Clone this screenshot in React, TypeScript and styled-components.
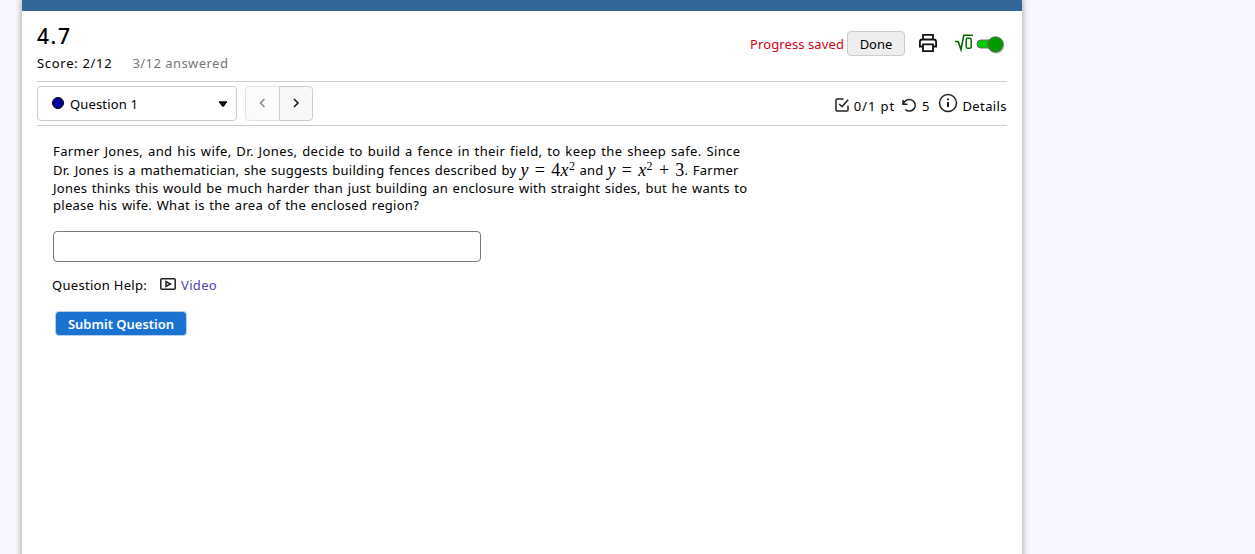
import styled, { createGlobalStyle } from "styled-components";

type SpacingProps = { $spacing?: number };

export default function App() {
    return (
        <>
            <GlobalStyle />
            <Page>
                <TopBar />
                <Content>
                    <Header>
                        <div>
                            <Title>4.7</Title>
                            <ScoreRow>
                                <Label $spacing={0.7}>Score: 2/12</Label>
                                <Answered>3/12 answered</Answered>
                            </ScoreRow>
                        </div>
                        <HeaderTools>
                            <Saved>Progress saved</Saved>
                            <DoneButton>Done</DoneButton>
                            <PrintIcon />
                            <MathToggle />
                        </HeaderTools>
                    </Header>
                    <Toolbar>
                        <Select>
                            <Dot />
                            <Label $spacing={0.15}>Question 1</Label>
                            <Caret viewBox="0 0 8 6">
                                <path d="M0 0.3h8v1L4.6 5.7H3.4L0 1.3z" />
                            </Caret>
                        </Select>
                        <Pager>
                            <PageButton $disabled aria-label="Previous question">
                                <svg width="8" height="10" viewBox="0 0 8 10"><path d="M5.5 1L1.5 5l4 4" /></svg>
                            </PageButton>
                            <PageButton aria-label="Next question">
                                <svg width="8" height="10" viewBox="0 0 8 10"><path d="M2 1l4 4-4 4" /></svg>
                            </PageButton>
                        </Pager>
                        <Details>
                            <CheckIcon />
                            <Points>0/1 pt</Points>
                            <RetryIcon />
                            <Tries>5</Tries>
                            <InfoIcon />
                            <Label $spacing={0.4}>Details</Label>
                        </Details>
                    </Toolbar>
                    <Question>
                        <Line $height={18} $spacing={0.39}>
                            Farmer Jones, and his wife, Dr. Jones, decide to build a fence in their field, to keep the sheep safe. Since
                        </Line>
                        <Line $height={20} $spacing={0.25}>
                            <span>Dr. Jones is a mathematician, she suggests building fences described by</span>
                            <Formula $width={57}><i>y</i> = 4<i>x</i><sup>2</sup></Formula>
                            <span>and</span>
                            <Formula $width={75}><i>y</i> = <i>x</i><sup>2</sup> + 3</Formula>
                            <span>. Farmer</span>
                        </Line>
                        <Line $height={17} $spacing={0.24}>
                            Jones thinks this would be much harder than just building an enclosure with straight sides, but he wants to
                        </Line>
                        <Line $height={17} $spacing={0.27}>
                            please his wife. What is the area of the enclosed region?
                        </Line>
                        <AnswerInput aria-label="Answer" />
                    </Question>
                    <Help>
                        <Label $spacing={0.3}>Question Help:</Label>
                        <VideoIcon />
                        <VideoLink>Video</VideoLink>
                    </Help>
                    <SubmitButton>Submit Question</SubmitButton>
                </Content>
            </Page>
        </>
    );
}

const PrintIcon = () => (
    <Printer viewBox="0 0 20 20">
        <path d="M5 6V1.9h10V6M5 13.5H1.9V9q0-2.5 2.5-2.5h11.2q2.5 0 2.5 2.5v4.5H15" />
        <path d="M5 11.3h10v6.8H5z" />
    </Printer>
);

const MathToggle = () => (
    <Toggle viewBox="0 0 52 24">
        <path d="M1 9.5h3.2L7 17.6 9.8 3.2H19" fill="none" stroke="#006a00" strokeWidth="1.6" />
        <rect x="12.2" y="6.3" width="5" height="10" rx="1.6" fill="none" stroke="#006a00" strokeWidth="1.5" />
        <rect x="23" y="8" width="22" height="8" rx="4" fill="#0c0" stroke="#666" />
        <circle cx="42.5" cy="13.8" r="8" fill="#000" opacity="0.2" />
        <circle cx="41.5" cy="12.5" r="7.8" fill="#009900" stroke="#666" strokeWidth="0.8" />
    </Toggle>
);

const CheckIcon = () => (
    <Icon $size={14} $gap={5} $lift={1} viewBox="0 0 14 14">
        <path d="M8.5 1H2q-1 0-1 1v10q0 1 1 1h10q1 0 1-1V7.5" />
        <path d="M4.2 6l2.8 2.6L13.2 1.8" />
    </Icon>
);

const RetryIcon = () => (
    <Icon $size={15} $gap={5} $lift={1} viewBox="0 0 15 15">
        <path d="M1 2v4.3h4.5M1.4 6A6 5.8 0 1 1 3.4 11.7" />
    </Icon>
);

const InfoIcon = () => (
    <Icon $size={20} $gap={4} $lift={3} viewBox="0 0 20 20">
        <circle cx="10" cy="10" r="8.5" />
        <path d="M10 9v5M10 5.5v1.7" strokeWidth="2" />
    </Icon>
);

const VideoIcon = () => (
    <Icon $size={16} $gap={5} $lift={1} viewBox="0 0 16 16">
        <rect x="0.8" y="2.7" width="14.4" height="10.6" rx="1" />
        <path d="M6 5.5v5L10.5 8z" />
    </Icon>
);

const GlobalStyle = createGlobalStyle`
    * {
        box-sizing: border-box;
    }
    body {
        margin: 0;
        overflow: hidden;
        background-color: #f7f7ff;
        font-family: "Noto Sans", sans-serif;
        font-size: 13px;
        color: #000;
    }
`;

const Page = styled.div`
    width: 1000px;
    height: 570px;
    margin-left: 22px;
    background-color: #fff;
    box-shadow: 0 0 6px 1px #aaa;
`;

const TopBar = styled.div`
    height: 11px;
    background-color: #336699;
`;

const Content = styled.main`
    padding: 0 15px;
`;

const Header = styled.header`
    display: flex;
    justify-content: space-between;
    height: 70px;
    padding-top: 11px;
`;

const Title = styled.h1`
    margin: 0;
    font-size: 21px;
    line-height: 28px;
    font-weight: 500;
    letter-spacing: 1.6px;
`;

const ScoreRow = styled.div`
    display: flex;
    gap: 20px;
    line-height: 26px;
`;

const Label = styled.span<SpacingProps>`
    white-space: nowrap;
    letter-spacing: ${({ $spacing = 0 }) => $spacing}px;
`;

const Answered = styled(Label)`
    color: #767676;
    letter-spacing: 0.45px;
`;

const HeaderTools = styled.div`
    display: flex;
    align-items: center;
    height: 43px;
`;

const Saved = styled(Label)`
    color: #d80012;
    letter-spacing: 0.1px;
    margin-right: 3px;
`;

const DoneButton = styled.button`
    width: 58px;
    height: 25px;
    padding: 0;
    border: 1px solid #ccc;
    border-radius: 4px;
    background-color: #eee;
    font: inherit;
    color: #000;
`;

const Printer = styled.svg`
    width: 20px;
    height: 20px;
    margin: -1px 16px 0 13px;
    fill: none;
    stroke: #111;
    stroke-width: 1.8;
`;

const Toggle = styled.svg`
    width: 52px;
    height: 24px;
    margin-right: 1px;
`;

const Toolbar = styled.div`
    display: flex;
    align-items: center;
    height: 45px;
    border-top: 1px solid #ccc;
    border-bottom: 1px solid #ccc;
`;

const Select = styled.div`
    display: flex;
    align-items: center;
    width: 200px;
    height: 35px;
    padding: 0 9px 0 14px;
    border: 1px solid #ccc;
    border-radius: 4px;
`;

const Dot = styled.span`
    width: 12px;
    height: 12px;
    margin: -2px 6px 0 0;
    border: 1px solid #000;
    border-radius: 50%;
    background-color: #00009f;
`;

const Caret = styled.svg`
    width: 8px;
    height: 6px;
    margin-left: auto;
`;

const Pager = styled.div`
    display: flex;
    margin-left: 8px;
`;

const PageButton = styled.button<{ $disabled?: boolean }>`
    width: 34px;
    height: 35px;
    padding: 0;
    border: 1px solid ${({ $disabled }) => ($disabled ? "#e2e2e2" : "#ccc")};
    border-right-width: ${({ $disabled }) => ($disabled ? 0 : "1px")};
    border-radius: ${({ $disabled }) => ($disabled ? "4px 0 0 4px" : "0 4px 4px 0")};
    background-color: ${({ $disabled }) => ($disabled ? "#fbfbfb" : "#f8f8f8")};
    svg {
        fill: none;
        stroke: ${({ $disabled }) => ($disabled ? "#888" : "#111")};
        stroke-width: 1.5;
    }
`;

const Details = styled.div`
    display: flex;
    align-items: center;
    margin: 5px 0 0 auto;
`;

const Points = styled(Label)`
    letter-spacing: 0.9px;
    margin-right: 7px;
`;

const Tries = styled(Label)`
    margin-right: 9px;
`;

const Icon = styled.svg<{ $size: number; $gap: number; $lift?: number }>`
    flex: none;
    width: ${({ $size }) => $size}px;
    height: ${({ $size }) => $size}px;
    margin: -${({ $lift = 0 }) => $lift * 2}px ${({ $gap }) => $gap}px 0 0;
    fill: none;
    stroke: #222;
    stroke-width: 1.5;
`;

const Question = styled.section`
    padding: 16px 16px 0;
`;

const Line = styled.div<{ $height: number; $spacing: number }>`
    display: flex;
    height: ${({ $height }) => $height}px;
    line-height: ${({ $height }) => $height}px;
    letter-spacing: ${({ $spacing }) => $spacing}px;
    word-spacing: 1px;
    white-space: nowrap;
`;

const Formula = styled.span<{ $width: number }>`
    width: ${({ $width }) => $width}px;
    margin: 0 2px 0 4px;
    font-family: "Liberation Serif", serif;
    font-size: 18px;
    letter-spacing: 0.4px;
    sup {
        font-size: 12px;
        line-height: 0;
        vertical-align: 6px;
    }
`;

const AnswerInput = styled.input`
    display: block;
    width: 428px;
    height: 31px;
    margin-top: 17px;
    border: 1px solid #777;
    border-radius: 4px;
    background-color: #fff;
`;

const Help = styled.div`
    display: flex;
    align-items: center;
    height: 20px;
    margin-top: 13px;
    padding-left: 15px;
    svg {
        margin-left: 13px;
    }
`;

const VideoLink = styled.a`
    color: #4c43bb;
    letter-spacing: 0.3px;
`;

const SubmitButton = styled.button`
    width: 132px;
    height: 25px;
    margin: 16px 0 0 18px;
    padding: 0;
    border: 1px solid #b9cfe8;
    border-radius: 4px;
    background-color: #1a73d1;
    font: inherit;
    font-weight: 600;
    color: #fff;
`;
